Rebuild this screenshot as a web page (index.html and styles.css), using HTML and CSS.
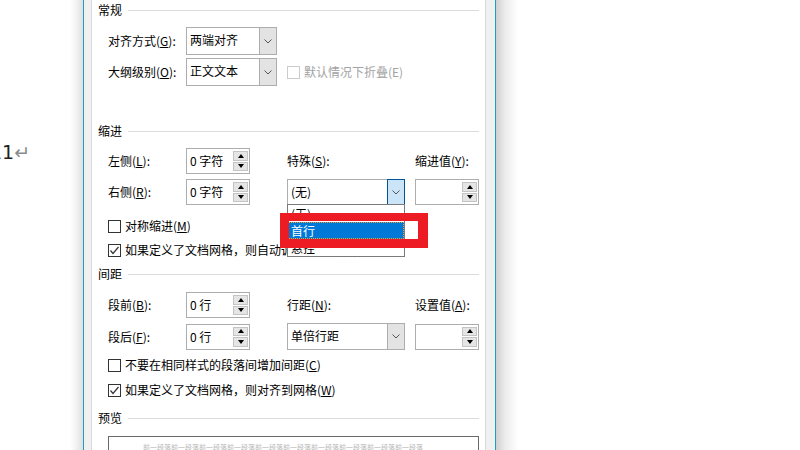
FILE: index.html
```html
<!DOCTYPE html>
<html lang="zh-CN">
<head>
    <meta charset="UTF-8">
    <meta name="viewport" content="width=device-width, initial-scale=1.0">
    <title>段落</title>
    <link rel="stylesheet" href="styles.css">
</head>
<body>
    <div class="desk">
        <div class="doc">
            <p class="doc-line">11<span class="mark">↵</span></p>
        </div>
        <div class="shade-left"></div>

        <div class="dialog">
            <div class="page">
                <!-- 常规 -->
                <div class="group-title"><span>常规</span><i></i></div>
                <div class="grid row-sel">
                    <span class="label">对齐方式(<u>G</u>):</span>
                    <div class="select w91">
                        <span class="value">两端对齐</span>
                        <span class="arrow"><svg width="8" height="5" viewBox="0 0 8 5"><polyline points="0.5,0.5 4,4 7.5,0.5" fill="none" stroke="#555" stroke-width="1"/></svg></span>
                    </div>
                </div>
                <div class="grid row-sel gap3">
                    <span class="label">大纲级别(<u>O</u>):</span>
                    <div class="select w91">
                        <span class="value">正文文本</span>
                        <span class="arrow"><svg width="8" height="5" viewBox="0 0 8 5"><polyline points="0.5,0.5 4,4 7.5,0.5" fill="none" stroke="#555" stroke-width="1"/></svg></span>
                    </div>
                    <div class="check-inline span2 disabled">
                        <span class="check"></span>
                        <span>默认情况下折叠(E)</span>
                    </div>
                </div>

                <!-- 缩进 -->
                <div class="group-title mt35"><span>缩进</span><i></i></div>
                <div class="grid row-spin mt7">
                    <span class="label">左侧(<u>L</u>):</span>
                    <div class="spin">
                        <span class="value">0 字符</span>
                        <span class="btns"><b class="up"></b><b class="down"></b></span>
                    </div>
                    <span class="label">特殊(<u>S</u>):</span>
                    <span class="label">缩进值(<u>Y</u>):</span>
                </div>
                <div class="grid row-spin mt5">
                    <span class="label">右侧(<u>R</u>):</span>
                    <div class="spin">
                        <span class="value">0 字符</span>
                        <span class="btns"><b class="up"></b><b class="down"></b></span>
                    </div>
                    <div class="combo">
                        <div class="select w118 open">
                            <span class="value">(无)</span>
                            <span class="arrow"><svg width="8" height="5" viewBox="0 0 8 5"><polyline points="0.5,0.5 4,4 7.5,0.5" fill="none" stroke="#555" stroke-width="1"/></svg></span>
                        </div>
                        <ul class="dropdown">
                            <li>(无)</li>
                            <li class="active">首行</li>
                            <li>悬挂</li>
                            <span class="mark-box"></span>
                        </ul>
                    </div>
                    <div class="spin">
                        <span class="value"></span>
                        <span class="btns"><b class="up"></b><b class="down"></b></span>
                    </div>
                </div>
                <div class="check-row mt11">
                    <span class="check"></span>
                    <span>对称缩进(<u>M</u>)</span>
                </div>
                <div class="check-row mt4">
                    <span class="check"><svg width="11" height="11" viewBox="0 0 11 11"><polyline points="1.5,5.5 4,8.5 9.5,2" fill="none" stroke="#333" stroke-width="1.2"/></svg></span>
                    <span>如果定义了文档网格，则自动调整右缩进(<u>D</u>)</span>
                </div>

                <!-- 间距 -->
                <div class="group-title mt4"><span>间距</span><i></i></div>
                <div class="grid row-spin mt8">
                    <span class="label">段前(<u>B</u>):</span>
                    <div class="spin">
                        <span class="value">0 行</span>
                        <span class="btns"><b class="up"></b><b class="down"></b></span>
                    </div>
                    <span class="label">行距(<u>N</u>):</span>
                    <span class="label">设置值(<u>A</u>):</span>
                </div>
                <div class="grid row-spin mt5">
                    <span class="label">段后(<u>F</u>):</span>
                    <div class="spin">
                        <span class="value">0 行</span>
                        <span class="btns"><b class="up"></b><b class="down"></b></span>
                    </div>
                    <div class="select w118 tall">
                        <span class="value">单倍行距</span>
                        <span class="arrow"><svg width="8" height="5" viewBox="0 0 8 5"><polyline points="0.5,0.5 4,4 7.5,0.5" fill="none" stroke="#555" stroke-width="1"/></svg></span>
                    </div>
                    <div class="spin">
                        <span class="value"></span>
                        <span class="btns"><b class="up"></b><b class="down"></b></span>
                    </div>
                </div>
                <div class="check-row mt6">
                    <span class="check"></span>
                    <span>不要在相同样式的段落间增加间距(<u>C</u>)</span>
                </div>
                <div class="check-row mt5">
                    <span class="check"><svg width="11" height="11" viewBox="0 0 11 11"><polyline points="1.5,5.5 4,8.5 9.5,2" fill="none" stroke="#333" stroke-width="1.2"/></svg></span>
                    <span>如果定义了文档网格，则对齐到网格(<u>W</u>)</span>
                </div>

                <!-- 预览 -->
                <div class="group-title mt8"><span>预览</span><i></i></div>
                <div class="preview">
                    <p>前一段落前一段落前一段落前一段落前一段落前一段落前一段落前一段落前一段落前一段落</p>
                </div>
            </div>
        </div>

        <div class="shade-right"></div>
    </div>
</body>
</html>
```

FILE: styles.css
```css
/* Reset */
* {
    margin: 0;
    padding: 0;
    box-sizing: border-box;
}

body {
    background: #fff;
    color: #000;
    font-family: "Noto Sans CJK SC", "Noto Sans", sans-serif;
    font-size: 12px;
    overflow: hidden;
}

.desk {
    display: flex;
    height: 450px;
}

/* document behind the dialog */
.doc {
    flex: 0 0 70px;
    overflow: hidden;
}

.doc-line {
    margin-top: 140px;
    margin-left: -10px;
    font-family: "DejaVu Sans", sans-serif;
    font-size: 19px;
    line-height: 24px;
    color: #222;
    white-space: nowrap;
}

.doc-line .mark {
    color: #8a8a8a;
}

.shade-left {
    flex: 0 0 13px;
    background: linear-gradient(to right, #fff, #f2f2f2 50%, #dedede);
}

.shade-right {
    flex: 0 0 22px;
    background: linear-gradient(to right, #cfcfcf, #ebebeb 40%, #fff);
}

/* dialog frame */
.dialog {
    flex: 0 0 413px;
    background: #f0f0f0;
    border-left: 1px solid #1e9cc4;
    border-right: 1px solid #1e9cc4;
    padding: 0 9px 0 7px;
}

.page {
    height: 100%;
    background: #fff;
    border-left: 1px solid #dadada;
    border-right: 1px solid #dadada;
}

.group-title {
    display: flex;
    align-items: center;
    gap: 6px;
    height: 20px;
    padding: 0 6px;
    line-height: 16px;
}

.group-title i {
    flex: 1;
    height: 1px;
    background: #dcdcdc;
}

.grid {
    display: grid;
    grid-template-columns: 78px 101px 128px 64px;
    align-items: center;
    padding-left: 16px;
}

.row-sel {
    height: 28px;
    margin-top: 7px;
}

.row-sel.gap3 {
    margin-top: 3px;
}

.row-spin {
    height: 26px;
}

.mt4 { margin-top: 4px; }
.mt5 { margin-top: 5px; }
.mt6 { margin-top: 6px; }
.mt7 { margin-top: 7px; }
.mt8 { margin-top: 8px; }
.mt11 { margin-top: 11px; }
.mt35 { margin-top: 35px; }

.label {
    line-height: 16px;
    white-space: nowrap;
}

u {
    text-decoration: underline;
    text-underline-offset: 1px;
}

/* combo boxes */
.select {
    display: flex;
    height: 28px;
    border: 1px solid #adadad;
    background: #fff;
}

.select.w91 { width: 91px; }
.select.w118 { width: 118px; height: 26px; }
.select.tall { height: 27px; }

.select .value {
    flex: 1;
    padding-left: 3px;
    line-height: 24px;
    white-space: nowrap;
}

.select .arrow {
    width: 17px;
    display: flex;
    align-items: center;
    justify-content: center;
    background: #e3e3e3;
    border-left: 1px solid #adadad;
}

.select.open .arrow {
    background: #cce4f7;
    border: 1px solid #005499;
    margin: -1px -1px -1px 0;
    width: 18px;
}

.combo {
    position: relative;
    z-index: 2;
}

.dropdown {
    position: absolute;
    top: 25px;
    left: 0;
    width: 118px;
    list-style: none;
    background: #fff;
    border: 1px solid #7a7a7a;
}

.dropdown li {
    height: 17px;
    line-height: 17px;
    padding-left: 3px;
}

.dropdown li.active {
    background: #0078d7;
    color: #fff;
    outline: 1px dotted #f4a32c;
    outline-offset: -1px;
}

.mark-box {
    position: absolute;
    top: 8px;
    left: -8px;
    width: 148px;
    height: 35px;
    border: solid #ed1c24;
    border-width: 8px 10px 9px 9px;
}

/* spin boxes */
.spin {
    display: flex;
    width: 64px;
    height: 26px;
    border: 1px solid #adadad;
    background: #fff;
}

.spin .value {
    flex: 1;
    padding-left: 3px;
    line-height: 23px;
    white-space: nowrap;
}

.spin .btns {
    display: flex;
    flex-direction: column;
    gap: 1px;
    width: 15px;
    margin: 2px 1px 2px 0;
}

.spin .btns b {
    flex: 1;
    display: flex;
    align-items: center;
    justify-content: center;
    background: #e5e5e5;
    border: 1px solid #c4c4c4;
}

.spin .btns b::before {
    content: "";
    border-left: 3.5px solid transparent;
    border-right: 3.5px solid transparent;
}

.spin .btns .up::before {
    border-bottom: 4px solid #000;
}

.spin .btns .down::before {
    border-top: 4px solid #000;
}

/* check boxes */
.check-row,
.check-inline {
    display: flex;
    align-items: center;
    gap: 4px;
    height: 20px;
    line-height: 16px;
    white-space: nowrap;
}

.check-row {
    padding-left: 16px;
}

.span2 {
    grid-column: span 2;
}

.check {
    flex: 0 0 13px;
    width: 13px;
    height: 13px;
    border: 1px solid #333;
    background: #fff;
    display: flex;
    align-items: center;
    justify-content: center;
}

.disabled {
    color: #a3a3a3;
}

.disabled .check {
    border-color: #cccccc;
}

/* preview */
.preview {
    margin: 8px 6px 0 16px;
    height: 40px;
    border: 1px solid #696969;
    padding: 6px 0 0 34px;
    overflow: hidden;
}

.preview p {
    font-size: 7px;
    line-height: 9px;
    color: #b5b5b5;
    white-space: nowrap;
}
```
